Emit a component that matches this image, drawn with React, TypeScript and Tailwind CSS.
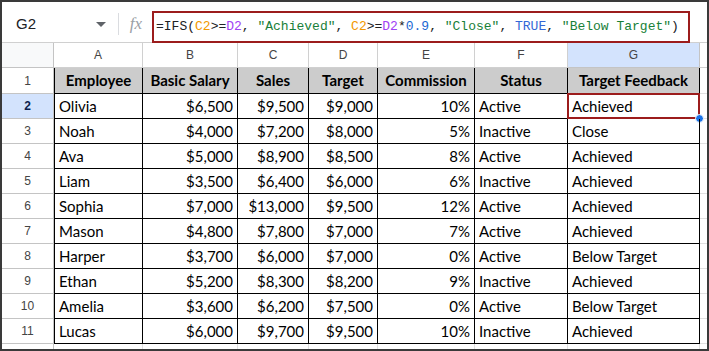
import { Fragment } from "react";

const cols = ["A", "B", "C", "D", "E", "F", "G"];

const header = ["Employee", "Basic Salary", "Sales", "Target", "Commission", "Status", "Target Feedback"];

const rows = [
    ["Olivia", "$6,500", "$9,500", "$9,000", "10%", "Active", "Achieved"],
    ["Noah", "$4,000", "$7,200", "$8,000", "5%", "Inactive", "Close"],
    ["Ava", "$5,000", "$8,900", "$8,500", "8%", "Active", "Achieved"],
    ["Liam", "$3,500", "$6,400", "$6,000", "6%", "Inactive", "Achieved"],
    ["Sophia", "$7,000", "$13,000", "$9,500", "12%", "Active", "Achieved"],
    ["Mason", "$4,800", "$7,800", "$7,000", "7%", "Active", "Achieved"],
    ["Harper", "$3,700", "$6,000", "$7,000", "0%", "Active", "Below Target"],
    ["Ethan", "$5,200", "$8,300", "$8,200", "9%", "Inactive", "Achieved"],
    ["Amelia", "$3,600", "$6,200", "$7,500", "0%", "Active", "Below Target"],
    ["Lucas", "$6,000", "$9,700", "$9,500", "10%", "Inactive", "Achieved"],
];

const gridCols = "grid grid-cols-[52px_89px_95px_71px_69px_97px_93px_132px_1fr]";

const Formula = () => (
    <span className="text-[#202124]">
        =IFS(<span className="text-[#f29900]">C2</span>&gt;=<span className="text-[#a142f4]">D2</span>,{" "}
        <span className="text-[#188038]">"Achieved"</span>, <span className="text-[#f29900]">C2</span>&gt;=
        <span className="text-[#a142f4]">D2</span>*<span className="text-[#1967d2]">0.9</span>,{" "}
        <span className="text-[#188038]">"Close"</span>, <span className="text-[#3367d6]">TRUE</span>,{" "}
        <span className="text-[#188038]">"Below Target"</span>)
    </span>
);

const App = () => {
    return (
        <div className="w-[709px] h-[351px] overflow-hidden bg-white border-2 border-[#3a3a3a] font-['Liberation_Sans',sans-serif]">
            {/* formula bar */}
            <div className="h-[40px] flex items-center">
                <div className="w-[116px] flex items-center pl-[14px] pr-3 text-[15px] text-[#202124]">
                    <span className="flex-1 pt-1">G2</span>
                    <span className="w-0 h-0 border-l-[5px] border-r-[5px] border-t-[5px] border-l-transparent border-r-transparent border-t-[#5f6368] mt-1"></span>
                </div>
                <div className="w-px h-[22px] bg-[#dadce0] mt-1"></div>
                <div className="w-[34px] text-center text-[17px] italic text-[#9aa0a6] font-['Liberation_Serif',serif] mt-1">fx</div>
                <div className="ml-[-1px] mt-[9px] h-[32px] w-[538px] border-2 border-[#9c1c1c] flex items-center pl-[2px] font-['Liberation_Mono',monospace] text-[13px] whitespace-nowrap">
                    <Formula />
                </div>
            </div>

            {/* column letters */}
            <div className={`${gridCols} h-[26px] border-t border-[#d0d0d0] text-[12px] text-[#444]`}>
                <div className="bg-[#f8f9fa] border-r border-b border-[#c4c4c4]"></div>
                {cols.map((c) => (
                    <div
                        key={c}
                        className={`flex items-center justify-center border-r border-b ${c === "G" ? "bg-[#d3e3fd] border-[#c4c4c4]" : "border-[#d0d0d0]"}`}
                    >
                        {c}
                    </div>
                ))}
                <div className="border-b border-[#d0d0d0]"></div>
            </div>

            {/* table */}
            <div className="font-['Lato',sans-serif] text-[15px] text-black">
                <div className={`${gridCols} h-[26px]`}>
                    <div className="flex items-center justify-center border-r border-b border-[#c4c4c4] text-[12px] text-[#444] font-['Liberation_Sans',sans-serif]">1</div>
                    {header.map((h, i) => (
                        <div
                            key={h}
                            className={`flex items-center justify-center font-bold bg-[#cccccc] border-r border-b border-black ${i === 0 ? "border-l" : ""}`}
                        >
                            {h}
                        </div>
                    ))}
                    <div className="border-b border-[#e0e0e0]"></div>
                </div>
                {rows.map((r, ri) => (
                    <div key={ri} className={`${gridCols} h-[25px]`}>
                        <div
                            className={`flex items-center justify-center border-r border-b border-[#c4c4c4] text-[12px] font-['Liberation_Sans',sans-serif] ${ri === 0 ? "bg-[#d3e3fd] font-bold text-[#0b1f4f]" : "text-[#444]"}`}
                        >
                            {ri + 2}
                        </div>
                        {r.map((v, ci) => {
                            const right = ci >= 1 && ci <= 4;
                            const selected = ri === 0 && ci === 6;
                            return (
                                <Fragment key={ci}>
                                    <div
                                        className={`relative flex items-center px-[4px] border-r border-b border-black ${ci === 0 ? "border-l" : ""} ${right ? "justify-end" : "justify-start"}`}
                                    >
                                        {v}
                                        {selected && (
                                            <>
                                                <div className="absolute inset-[-1px] border-2 border-[#9c1c1c]"></div>
                                                <div className="absolute right-[-5px] bottom-[-5px] w-[9px] h-[9px] rounded-full bg-[#1a73e8] border border-white"></div>
                                            </>
                                        )}
                                    </div>
                                </Fragment>
                            );
                        })}
                        <div className="border-b border-[#e0e0e0]"></div>
                    </div>
                ))}
                <div className={`${gridCols} h-[25px]`}>
                    <div className="border-r border-[#c4c4c4]"></div>
                    {cols.map((c) => (
                        <div key={c} className="border-r border-[#e0e0e0]"></div>
                    ))}
                    <div></div>
                </div>
            </div>
        </div>
    );
};

export default App;
